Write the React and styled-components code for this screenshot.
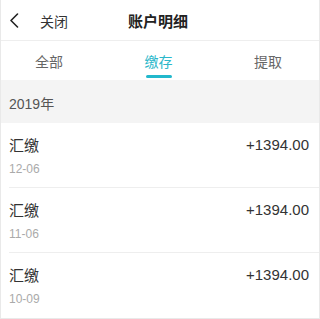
import React, { useState } from 'react'
import styled, { createGlobalStyle } from 'styled-components'

const GlobalStyle = createGlobalStyle`
  html, body {
    margin: 0;
    padding: 0;
    background: #fff;
  }
  * {
    box-sizing: border-box;
  }
`

const records = [
  { title: '汇缴', date: '12-06', amount: '+1394.00' },
  { title: '汇缴', date: '11-06', amount: '+1394.00' },
  { title: '汇缴', date: '10-09', amount: '+1394.00' },
]

const tabs = ['全部', '缴存', '提取']

export default function App() {
  const [active, setActive] = useState(1)

  return (
    <>
      <GlobalStyle />
      <Page>
        <Header>
          <Back>
            <svg width="10" height="15" viewBox="0 0 10 15">
              <path d="M8.5 1 L2 7.5 L8.5 14" fill="none" stroke="#222" strokeWidth="1.6" strokeLinecap="round" strokeLinejoin="round" />
            </svg>
          </Back>
          <Close>关闭</Close>
          <Title>账户明细</Title>
        </Header>
        <Tabs>
          {tabs.map((t, i) => (
            <Tab key={t} $active={i === active} onClick={() => setActive(i)}>
              {t}
            </Tab>
          ))}
        </Tabs>
        <Year>2019年</Year>
        <List>
          {records.map((r, i) => (
            <Item key={i}>
              <Left>
                <ItemTitle>{r.title}</ItemTitle>
                <ItemDate>{r.date}</ItemDate>
              </Left>
              <Amount>{r.amount}</Amount>
            </Item>
          ))}
        </List>
      </Page>
    </>
  )
}

const Page = styled.div`
  width: 320px;
  height: 319px;
  border: 1px solid #e9e9e9;
  border-top: none;
  background: #f4f4f4;
  display: flex;
  flex-direction: column;
  overflow: hidden;
  font-family: "Liberation Sans", "Noto Sans CJK SC", sans-serif;
`

const Header = styled.div`
  position: relative;
  height: 41px;
  display: flex;
  align-items: center;
  padding: 1px 0 0 8px;
  background: #fff;
  border-bottom: 1px solid #eee;
`

const Back = styled.div`
  width: 10px;
  height: 15px;
  display: flex;
`

const Close = styled.span`
  margin-left: 21px;
  font-size: 14px;
  color: #333;
  font-family: "Noto Sans CJK SC", sans-serif;
`

const Title = styled.span`
  margin-left: 60px;
  font-size: 15px;
  font-weight: 700;
  color: #222;
  font-family: "Noto Sans CJK SC", sans-serif;
`

const Tabs = styled.div`
  height: 39px;
  display: flex;
  justify-content: space-between;
  padding: 0 37px 0 34px;
  background: #fff;
`

const Tab = styled.div`
  position: relative;
  display: flex;
  align-items: center;
  font-size: 14px;
  font-family: "Noto Sans CJK SC", sans-serif;
  color: ${p => (p.$active ? '#2cb7ca' : '#666')};
  cursor: pointer;

  &::after {
    content: '';
    display: ${p => (p.$active ? 'block' : 'none')};
    position: absolute;
    left: 1px;
    right: 1px;
    bottom: 2px;
    height: 3px;
    border-radius: 2px;
    background: #22b8cc;
  }
`

const Year = styled.div`
  height: 43px;
  display: flex;
  align-items: center;
  padding: 2px 0 0 8px;
  font-size: 14px;
  color: #555;
  font-family: "Liberation Sans", "Noto Sans CJK SC", sans-serif;
`

const List = styled.div`
  background: #fff;
  padding-left: 8px;
`

const Item = styled.div`
  display: flex;
  justify-content: space-between;
  align-items: flex-start;
  padding: 12px 10px 9px 0;
  border-bottom: 1px solid #eee;

  &:last-child {
    border-bottom: none;
    padding-bottom: 10px;
  }
`

const Left = styled.div`
  display: flex;
  flex-direction: column;
`

const ItemTitle = styled.div`
  font-size: 15px;
  line-height: 20px;
  color: #333;
  font-family: "Noto Sans CJK SC", sans-serif;
`

const ItemDate = styled.div`
  margin-top: 5px;
  font-size: 12px;
  line-height: 18px;
  color: #aaa;
`

const Amount = styled.div`
  font-size: 15px;
  line-height: 20px;
  color: #333;
`
